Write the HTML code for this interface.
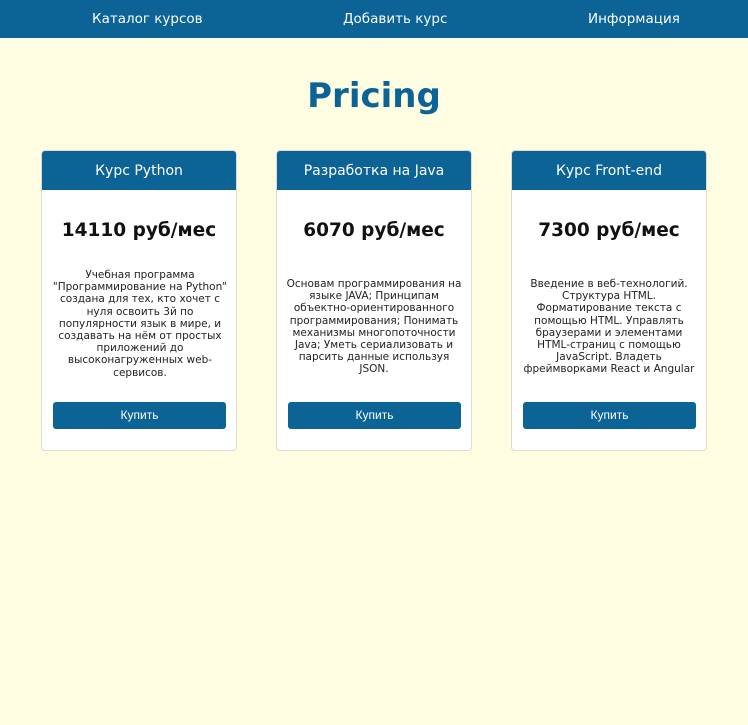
<!DOCTYPE html>
<html><head><meta charset="utf-8"><style>
*{margin:0;padding:0;box-sizing:border-box}
body{width:748px;height:725px;background:#fefde1;font-family:"DejaVu Sans",Verdana,sans-serif;position:relative;overflow:hidden}
.nav{position:absolute;left:0;top:0;width:748px;height:38px;background:#0b6396;color:#fff;font-size:13.5px}
.nav span{position:absolute;top:11px}
h1{position:absolute;top:76px;left:0;width:748px;text-align:center;color:#0b6396;font-size:34px;font-weight:bold;font-family:"DejaVu Sans",sans-serif}
.card{position:absolute;top:150px;width:196px;height:301px;background:#fff;border:1px solid #dcdcd0;border-radius:4px;overflow:hidden}
.hd{height:39px;background:#0b6396;color:#fff;font-size:14px;text-align:center;line-height:40px}
.pr{position:absolute;top:69px;left:0;width:100%;text-align:center;font-size:18.5px;font-weight:bold;color:#111}
.ds{position:absolute;left:10px;width:174px;text-align:center;font-size:10.5px;line-height:12.2px;color:#222}
.bt{position:absolute;left:11px;top:251px;width:173px;height:27px;background:#0b6396;border-radius:3px;color:#fff;font-size:12px;text-align:center;line-height:26px;font-family:"Liberation Sans",sans-serif}
</style></head><body>
<div class="nav"><span style="left:92px">Каталог курсов</span><span style="left:343px">Добавить курс</span><span style="left:588px">Информация</span></div>
<h1>Pricing</h1>
<div class="card" style="left:41px"><div class="hd">Курс Python</div><div class="pr">14110 руб/мес</div>
<div class="ds" style="top:118px;left:6px;width:184px">Учебная программа<br>"Программирование на Python" создана для тех, кто хочет с нуля освоить 3й по популярности язык в мире, и создавать на нём от простых приложений до высоконагруженных web-сервисов.</div><div class="bt">Купить</div></div>
<div class="card" style="left:276px"><div class="hd">Разработка на Java</div><div class="pr">6070 руб/мес</div>
<div class="ds" style="top:127px;left:0;width:194px;white-space:nowrap">Основам программирования на<br>языке JAVA; Принципам<br>объектно-ориентированного<br>программирования; Понимать<br>механизмы многопоточности<br>Java; Уметь сериализовать и<br>парсить данные используя<br>JSON.</div><div class="bt">Купить</div></div>
<div class="card" style="left:511px"><div class="hd">Курс Front-end</div><div class="pr">7300 руб/мес</div>
<div class="ds" style="top:127px">Введение в веб-технологий. Структура HTML. Форматирование текста с помощью HTML. Управлять браузерами и элементами HTML-страниц с помощью JavaScript. Владеть фреймворками React и Angular</div><div class="bt">Купить</div></div>
</body></html>
